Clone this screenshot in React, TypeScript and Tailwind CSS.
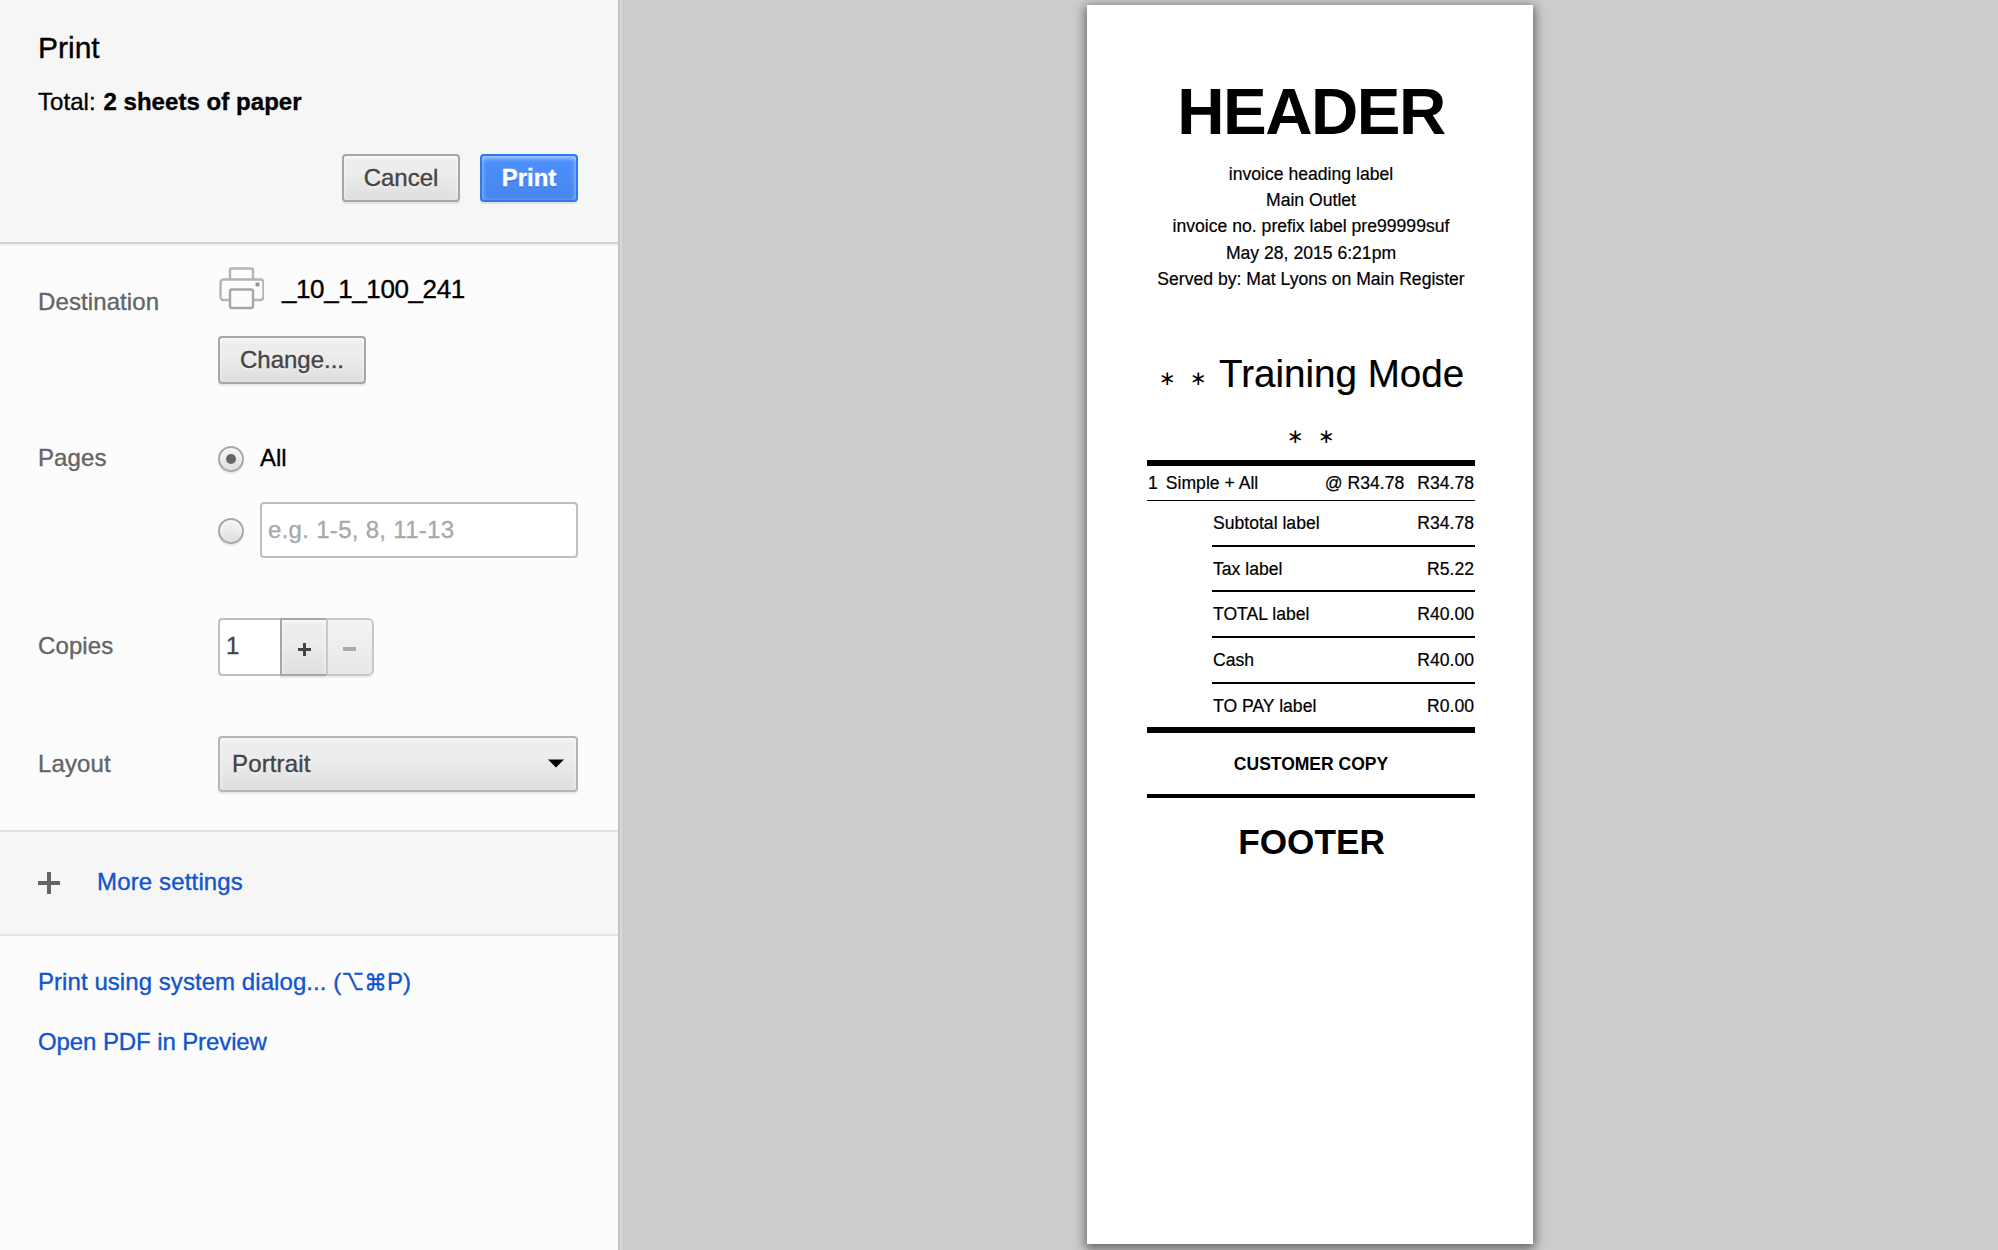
import type { ReactNode } from 'react';

const FACE =
  'border-2 bg-linear-to-b from-[#ededed] from-38% to-[#dedede] shadow-[0_2px_0_rgba(0,0,0,0.08),inset_0_2px_4px_rgba(255,255,255,0.75)]';
const FACE_TEXT = 'text-[#444] [text-shadow:0_2px_0_#f0f0f0]';

function Button({ className, children }: { className: string; children: ReactNode }) {
  return (
    <button
      className={`flex h-12 items-center justify-center rounded-[4px] border-[#a6a6a6] text-2xl leading-7 ${FACE} ${FACE_TEXT} ${className}`}
    >
      {children}
    </button>
  );
}

function Radio({ checked = false }: { checked?: boolean }) {
  return (
    <span
      className={`flex size-[26px] shrink-0 items-center justify-center rounded-full border-[#a8a8a8] ${FACE}`}
    >
      {checked && <span className="size-[10px] rounded-full bg-[#666]" />}
    </span>
  );
}

function PrinterIcon() {
  return (
    <svg width="46" height="44" viewBox="0 0 46 44" fill="#fcfcfc" stroke="#b4b4b4" strokeWidth="2.4">
      <rect x="12" y="2.5" width="23" height="14" rx="1.5" />
      <rect x="2.5" y="13.5" width="43" height="20.5" rx="3" />
      <rect x="12" y="23.5" width="23" height="18.5" rx="2" stroke="#a6a6a6" />
      <rect x="37.5" y="16.5" width="4" height="4" rx="1" fill="#999" stroke="none" />
    </svg>
  );
}

function Row({ label, labelTop, className, children }: { label: string; labelTop: string; className: string; children: ReactNode }) {
  return (
    <div className={`flex items-start ${className}`}>
      <div className={`w-[180px] shrink-0 tracking-[0.1px] text-[#646464] ${labelTop}`}>{label}</div>
      <div className="w-[360px]">{children}</div>
    </div>
  );
}

function Sidebar() {
  return (
    <aside className="h-full w-[622px] shrink-0 border-r-2 border-[#d9d9d9]">
      <div className="h-full border-r-2 border-[#c4c4c4] bg-[#fcfcfc] text-2xl leading-7 [-webkit-text-stroke-width:0.35px]">
        <header className="h-[244px] border-b-2 border-[#d2d2d2] bg-[#f6f6f6] pt-[30px] pr-10 pl-[38px]">
          <h1 className="text-[30px] leading-9">Print</h1>
          <p className="mt-[22px] tracking-[0.05px]">
            Total: <b className="ml-px">2 sheets of paper</b>
          </p>
          <div className="mt-[38px] flex justify-end gap-5">
            <Button className="w-[118px]">Cancel</Button>
            <button className="flex h-12 w-[98px] items-center justify-center rounded-[4px] border-2 border-[#3079ed] bg-linear-to-b from-[#4d90fe] to-[#4787ed] text-2xl leading-7 font-bold text-white shadow-[0_2px_0_rgba(0,0,0,0.08),inset_0_2px_5px_rgba(255,255,255,0.6)] [text-shadow:0_2px_0_#3c78d8]">
              Print
            </button>
          </div>
        </header>

        <section className="h-[588px] border-b-2 border-[#e2e2e2] pl-[38px] shadow-[inset_0_2px_0_#f3f3f3]">
          <Row label="Destination" labelTop="pt-[22px]" className="pt-[22px]">
            <div className="flex h-11 items-center">
              <PrinterIcon />
              <span className="ml-[18px] pt-0.5 text-[26px] tracking-[-0.4px]">_10_1_100_241</span>
            </div>
            <Button className="mt-[26px] w-[148px]">Change...</Button>
          </Row>

          <Row label="Pages" labelTop="" className="pt-[60px]">
            <div className="flex h-7 items-center">
              <span className="pt-0.5">
                <Radio checked />
              </span>
              <span className="ml-4">All</span>
            </div>
            <div className="mt-[30px] flex items-center">
              <span className="pt-0.5">
                <Radio />
              </span>
              <div className="ml-4 flex h-14 w-[318px] items-center rounded-[4px] border-2 border-[#bfbfbf] bg-white pl-[6px] tracking-[0.3px] text-[#a9a9a9]">
                e.g. 1-5, 8, 11-13
              </div>
            </div>
          </Row>

          <Row label="Copies" labelTop="pt-[14px]" className="pt-[60px]">
            <div className="flex h-[58px]">
              <div className="w-[62px] rounded-l-[4px] border-2 border-r-0 border-[#bfbfbf] bg-white pt-3 pl-[6px] text-[#444]">
                1
              </div>
              <div className={`flex w-[46px] items-center justify-center border-r-0 border-[#a6a6a6] pt-[5px] ${FACE}`}>
                <svg width="13" height="13" viewBox="0 0 13 13" stroke="#444" strokeWidth="3">
                  <path d="M6.5 0v13M0 6.5h13" />
                </svg>
              </div>
              <div className="flex w-12 items-center justify-center rounded-r-[6px] border-2 border-[#c8c8c8] bg-linear-to-b from-[#f3f3f3] to-[#e8e8e8] pt-[5px] shadow-[0_2px_0_rgba(0,0,0,0.05)]">
                <svg width="14" height="14" viewBox="0 0 14 14" stroke="#aaa" strokeWidth="4">
                  <path d="M0 6h13" />
                </svg>
              </div>
            </div>
          </Row>

          <Row label="Layout" labelTop="pt-[14px]" className="pt-[60px]">
            <div
              className={`flex h-14 items-center justify-between rounded-[4px] border-[#b5b5b5] pr-3 pl-3 tracking-[0.15px] ${FACE} ${FACE_TEXT}`}
            >
              Portrait
              <svg width="16" height="9" viewBox="0 0 16 9" className="-mt-0.5">
                <path d="M0 0.5h16L8 8.5z" />
              </svg>
            </div>
          </Row>
        </section>

        <section className="flex h-[104px] items-center border-b-2 border-[#e2e2e2] bg-[#f6f6f6] pl-[38px]">
          <svg width="22" height="22" viewBox="0 0 22 22" stroke="#666" strokeWidth="4">
            <path d="M11 0v22M0 11h22" />
          </svg>
          <a className="ml-[37px] pb-[3px] tracking-[0.15px] text-[#1155cc]">More settings</a>
        </section>

        <div className="flex flex-col gap-8 pt-8 pl-[38px] text-[#1155cc]">
          <a className="h-7 tracking-[0.06px] whitespace-nowrap">
            Print using system dialog... (<span className="font-['Inter'] text-[22.5px] leading-none">⌥⌘</span>P)
          </a>
          <a className="h-7 tracking-[-0.1px]">Open PDF in Preview</a>
        </div>
      </div>
    </aside>
  );
}

const HEADING = [
  'invoice heading label',
  'Main Outlet',
  'invoice no. prefix label pre99999suf',
  'May 28, 2015 6:21pm',
  'Served by: Mat Lyons on Main Register',
];

const TOTALS = [
  { label: 'Subtotal label', value: 'R34.78', size: 'h-[46px] border-b-2' },
  { label: 'Tax label', value: 'R5.22', size: 'h-[45px] border-b-2 pt-px' },
  { label: 'TOTAL label', value: 'R40.00', size: 'h-[46px] border-b-2' },
  { label: 'Cash', value: 'R40.00', size: 'h-[46px] border-b-2' },
  { label: 'TO PAY label', value: 'R0.00', size: 'h-[43px] pt-px' },
];

function Stars() {
  return (
    <span className="flex pt-2 font-['DejaVu_Sans'] text-[20px] leading-none">
      <span className="w-[31px] text-center">∗</span>
      <span className="w-[31px] text-center">∗</span>
    </span>
  );
}

function Receipt() {
  return (
    <div className="mt-[5px] h-[1239px] w-[446px] bg-white pr-[58px] pl-[60px] text-[17.6px] whitespace-nowrap shadow-[0_3px_10px_2px_rgba(0,0,0,0.5)]">
      <h2 className="flex justify-center pt-[70px] text-[65.5px] leading-[73px] font-bold tracking-[-1.5px]">HEADER</h2>
      <div className="mt-[13px] text-center leading-[26.2px] [-webkit-text-stroke-width:0.2px]">
        {HEADING.map((line) => (
          <div key={line}>{line}</div>
        ))}
      </div>
      <div className="mt-[53px] flex h-[58px] items-center pl-[5px]">
        <Stars />
        <span className="ml-[5px] text-[38.6px] leading-none [-webkit-text-stroke-width:0.2px]">Training Mode</span>
      </div>
      <div className="flex h-[57px] items-center justify-center">
        <Stars />
      </div>
      <div className="flex h-[41px] items-center border-t-6 border-b border-black [-webkit-text-stroke-width:0.2px]">
        <span className="ml-px">1</span>
        <span className="ml-2">Simple + All</span>
        <span className="ml-auto">@ R34.78</span>
        <span className="mr-px ml-[13px]">R34.78</span>
      </div>
      <div className="ml-[65px] [-webkit-text-stroke-width:0.2px]">
        {TOTALS.map((t) => (
          <div key={t.label} className={`flex items-center justify-between border-black px-px ${t.size}`}>
            <span>{t.label}</span>
            <span>{t.value}</span>
          </div>
        ))}
      </div>
      <div className="flex h-[71px] items-center justify-center border-t-6 border-b-4 border-black pt-px text-[17.5px] font-bold">
        CUSTOMER COPY
      </div>
      <div className="flex h-[88px] items-center justify-center pl-px text-[35.2px] font-bold">FOOTER</div>
    </div>
  );
}

export default function App() {
  return (
    <div className="flex h-[1250px] w-[1998px] overflow-hidden bg-[#cccccc] font-['Liberation_Sans',Arial,sans-serif] text-black">
      <Sidebar />
      <main className="flex-1 pl-[465px]">
        <Receipt />
      </main>
    </div>
  );
}
